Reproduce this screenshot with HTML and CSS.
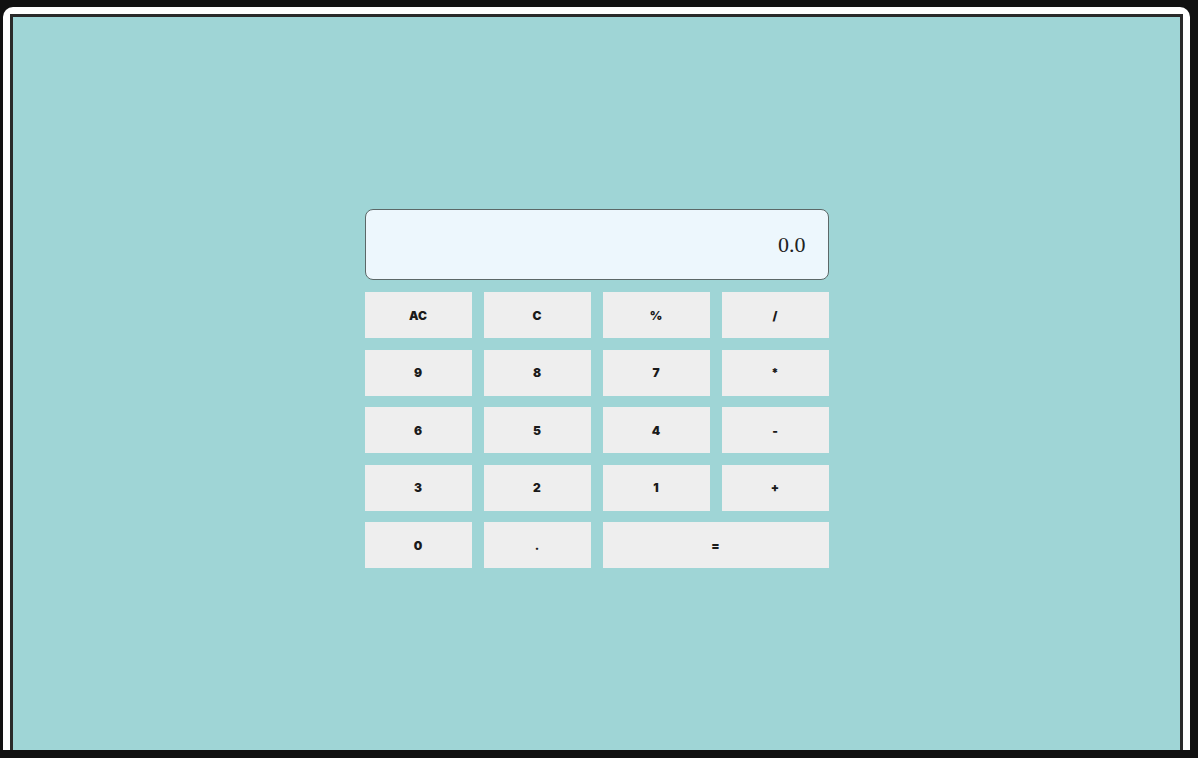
FILE: index.html
```html
<!DOCTYPE html>
<html lang="en">
<head>
<meta charset="utf-8">
<title>Calculator</title>
<link rel="stylesheet" href="styles.css">
</head>
<body>
<div class="frame">
  <div class="screen">
    <div class="calc">
      <div class="display">0.0</div>
      <div class="keys">
        <button class="key">AC</button>
        <button class="key">C</button>
        <button class="key">%</button>
        <button class="key">/</button>
        <button class="key">9</button>
        <button class="key">8</button>
        <button class="key">7</button>
        <button class="key">*</button>
        <button class="key">6</button>
        <button class="key">5</button>
        <button class="key">4</button>
        <button class="key">-</button>
        <button class="key">3</button>
        <button class="key">2</button>
        <button class="key">1</button>
        <button class="key">+</button>
        <button class="key">0</button>
        <button class="key">.</button>
        <button class="key key-wide">=</button>
      </div>
    </div>
  </div>
</div>
</body>
</html>
```

FILE: styles.css
```css
html, body {
  margin: 0;
  padding: 0;
  height: 100%;
  background: #111111;
  overflow: hidden;
}

.frame {
  margin: 7px 8px 0 3px;
  height: 743px;
  box-sizing: border-box;
  padding: 7px 7px 0 7px;
  background: #ffffff;
  border-radius: 10px 10px 0 0;
}

.screen {
  height: 736px;
  box-sizing: border-box;
  border: 3px solid #2a2a2a;
  border-bottom: none;
  background: #9fd5d6;
  display: flex;
  justify-content: center;
  align-items: flex-start;
  padding-top: 192px;
}

.calc {
  width: 464px;
  display: flex;
  flex-direction: column;
  gap: 12px;
}

.display {
  height: 71px;
  box-sizing: border-box;
  border: 1.5px solid #5c6868;
  border-radius: 8px;
  background: #edf7fd;
  display: flex;
  align-items: center;
  justify-content: flex-end;
  padding-right: 22px;
  font-family: "Liberation Serif", serif;
  font-size: 22px;
  color: #222;
}

.keys {
  display: grid;
  grid-template-columns: repeat(4, 107px);
  grid-auto-rows: 46px;
  column-gap: 12px;
  row-gap: 11.5px;
}

.key {
  border: none;
  margin: 0;
  padding: 0;
  background: #eeeeee;
  font-family: Inter, "Liberation Sans", sans-serif;
  font-weight: 900;
  font-size: 12px;
  color: #1a1a1a;
}

.key-wide {
  grid-column: span 2;
}
```
